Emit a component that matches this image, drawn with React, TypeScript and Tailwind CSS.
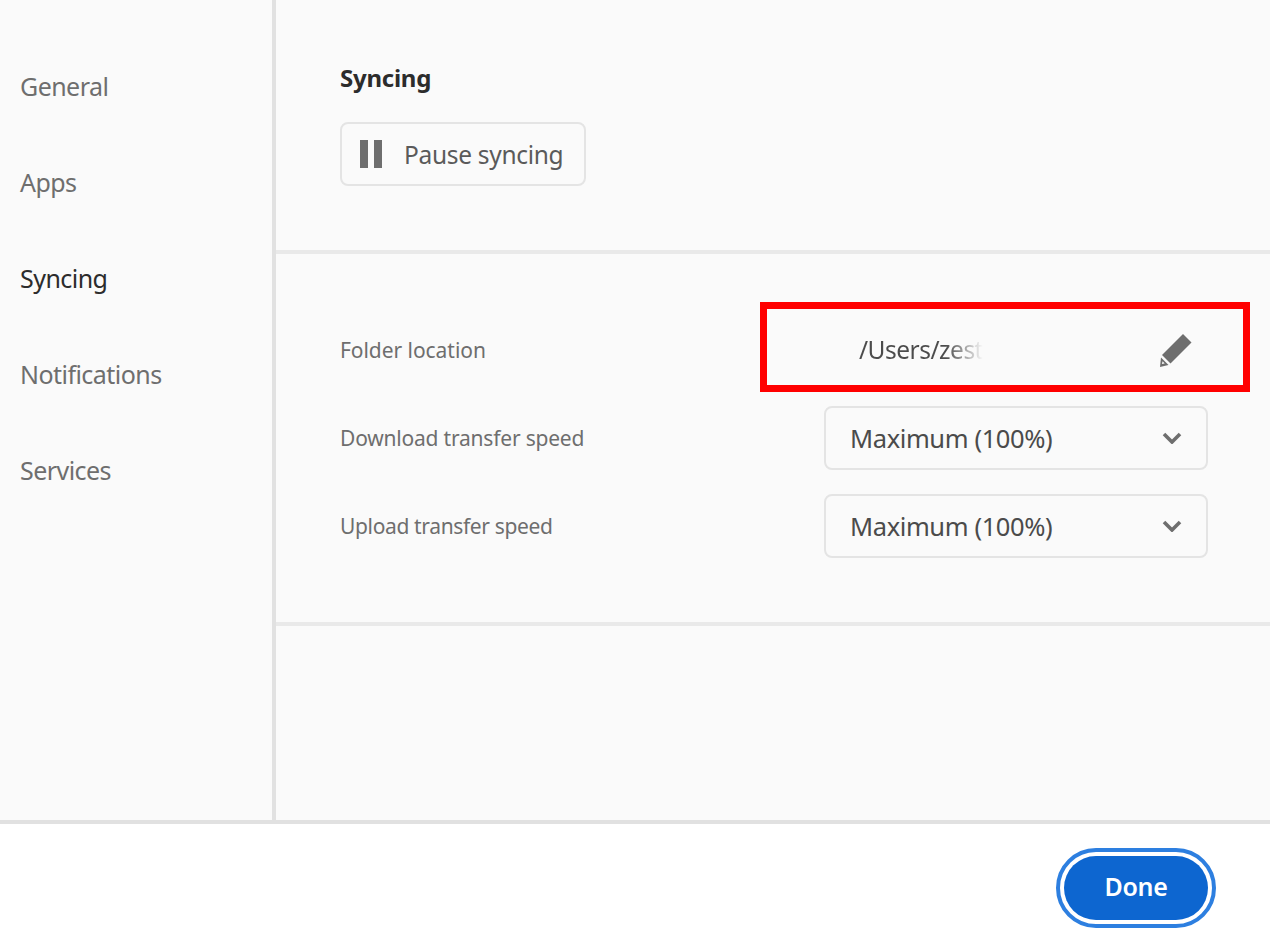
import React from 'react'

const navItems = ['General', 'Apps', 'Syncing', 'Notifications', 'Services']

function Chevron() {
  return (
    <svg width="20" height="12" viewBox="0 0 20 12" className="text-[#6e6e6e]">
      <path d="M2 2 L10 10 L18 2" fill="none" stroke="currentColor" strokeWidth="3.6" strokeLinejoin="miter" />
    </svg>
  )
}

function SpeedRow({ label, spacing }: { label: string; spacing: string }) {
  return (
    <div className="flex items-center justify-between h-16">
      <span className={`pt-[2px] text-[21px] text-[#6e6e6e] ${spacing}`}>{label}</span>
      <div className="w-[384px] h-16 flex items-center justify-between pl-[24px] pr-[24px] rounded-lg border-2 border-[#e4e4e4]">
        <span className="text-[25.5px] text-[#4b4b4b] tracking-[-0.4px]">Maximum (100%)</span>
        <Chevron />
      </div>
    </div>
  )
}

export default function App() {
  return (
    <div
      className="w-[1270px] h-[950px] flex flex-col bg-white overflow-hidden"
      style={{ fontFamily: '"Noto Sans", sans-serif' }}
    >
      <div className="h-[824px] flex bg-[#fafafa] border-b-4 border-[#e1e1e1]">
        <aside className="w-[276px] shrink-0 border-r-4 border-[#e1e1e1] pt-[38px] pl-5">
          {navItems.map((item) => (
            <div
              key={item}
              className={`h-[96px] text-[25px] tracking-[-0.55px] leading-[96px] ${
                item === 'Syncing' ? 'text-[#2c2c2c]' : 'text-[#6e6e6e]'
              }`}
            >
              {item}
            </div>
          ))}
        </aside>

        <main className="flex-1 min-w-0">
          <section className="h-[254px] border-b-4 border-[#e9e9e9] pl-16 pt-[59px]">
            <h2 className="text-[24px] leading-[38px] font-bold text-[#2c2c2c] tracking-[-0.25px]">Syncing</h2>
            <button className="mt-[25px] w-[246px] h-16 flex items-center pl-[18px] rounded-lg border-2 border-[#e4e4e4]">
              <span className="flex gap-[6px]">
                <span className="w-[8px] h-7 bg-[#6e6e6e]" />
                <span className="w-[8px] h-7 bg-[#6e6e6e]" />
              </span>
              <span className="ml-[22px] pt-[2px] text-[24.5px] text-[#5a5a5a] tracking-[-0.3px]">Pause syncing</span>
            </button>
          </section>

          <section className="relative h-[372px] border-b-4 border-[#e9e9e9] pl-16 pr-[62px] pt-[64px]">
            <div className="flex items-center justify-between h-[64px]">
              <span className="pt-[2px] text-[21px] text-[#6e6e6e] tracking-[-0.05px]">Folder location</span>
              <div className="w-[384px] flex items-center justify-between pl-[35px] pr-[15px]">
                <span
                  className="w-fit whitespace-nowrap text-[24.5px] tracking-[-0.5px] bg-gradient-to-r from-[#4b4b4b] from-[70%] to-transparent bg-clip-text"
                  style={{ WebkitTextFillColor: 'transparent' }}
                >
                  /Users/zest
                </span>
                <svg width="34" height="34" viewBox="0 0 34 34" className="text-[#6e6e6e]">
                  <path d="M24.5 1.5 L33 10 L12 31 L3.5 22.5 Z" fill="currentColor" transform="translate(-0.5 -0.5)" />
                  <path d="M2 24.5 L9.5 32 L1 34 Z" fill="currentColor" />
                  <path d="M3.6 28.3 L5.7 30.4 L2.9 31 Z" fill="#fafafa" />
                </svg>
              </div>
            </div>
            <div className="mt-[24px] flex flex-col gap-6">
              <SpeedRow label="Download transfer speed" spacing="tracking-[-0.2px]" />
              <SpeedRow label="Upload transfer speed" spacing="tracking-[-0.35px]" />
            </div>
            <div className="absolute left-[484px] top-[48px] w-[490px] h-[90px] border-[7px] border-[#ff0000]" />
          </section>
        </main>
      </div>

      <footer className="flex-1 flex justify-end items-start pt-6 pr-[54px]">
        <div className="w-[160px] h-[80px] rounded-full border-[4px] border-[#2d7fe0] p-1">
          <button className="w-full h-full pb-[2px] rounded-full bg-[#0d66d0] text-white text-[25px] font-semibold tracking-[-0.3px]">
            Done
          </button>
        </div>
      </footer>
    </div>
  )
}
